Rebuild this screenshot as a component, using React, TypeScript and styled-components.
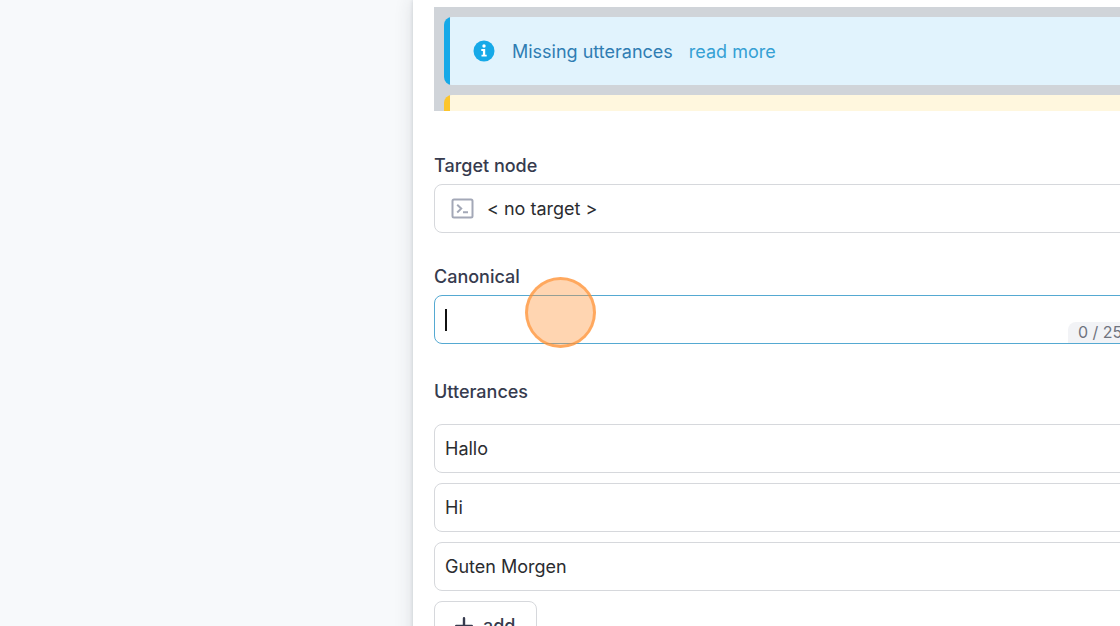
import React from "react";
import styled, { createGlobalStyle } from "styled-components";

const GlobalStyle = createGlobalStyle`
  * { box-sizing: border-box; }
  html, body, #root { height: 100%; }
  body {
    margin: 0;
    overflow: hidden;
    background: #f7f9fb;
    color: #2b2c2f;
    font-family: Inter, "Liberation Sans", sans-serif;
    font-size: 18px;
    font-weight: 400;
  }
  input, select, button { font: inherit; color: inherit; }
`;

const Page = styled.div`
  display: grid;
  grid-template-columns: 413px minmax(0, 1fr);
  height: 100%;
`;

const Backdrop = styled.aside`
  background: #f7f9fb;
`;

const Panel = styled.main`
  min-width: 0;
  padding: 7px 0 0 21px;
  background: #fff;
  box-shadow: 0 0 18px rgba(40, 48, 60, 0.14), 0 0 4px rgba(40, 48, 60, 0.16);
`;

const Content = styled.div`
  width: calc(100% + 23px);
`;

const Alerts = styled.section`
  display: flex;
  flex-direction: column;
  gap: 10px;
  height: 104px;
  padding: 10px;
  overflow: hidden;
  background: #d0d4d9;
`;

const Alert = styled.div<{ $tone: "info" | "warning" }>`
  display: flex;
  flex: none;
  align-items: center;
  height: 68px;
  padding-left: 29px;
  border-radius: 8px;
  background: linear-gradient(
    to right,
    ${(p) => (p.$tone === "info" ? "#16a9e8 6px, #e1f3fd 6px" : "#fcc52c 6px, #fff7de 6px")}
  );
  color: #2f7db3;
`;

const AlertText = styled.span`
  margin: 0 16px 0 17px;
`;

const AlertLink = styled.a`
  color: #35a0d4;
  text-decoration: none;
`;

const Field = styled.section<{ $space: number; $gap: number }>`
  display: flex;
  flex-direction: column;
  gap: ${(p) => p.$gap}px;
  margin-top: ${(p) => p.$space}px;
`;

const Label = styled.label`
  color: #363b4e;
  font-size: 18px;
  font-weight: 500;
  line-height: 24px;
`;

const Heading = styled(Label).attrs({ as: "h2" })`
  margin: 0;
`;

const Box = styled.div<{ $active?: boolean }>`
  position: relative;
  display: flex;
  align-items: center;
  height: 49px;
  border: 1px solid ${(p) => (p.$active ? "#55a9d2" : "#d6d8dc")};
  border-radius: 8px;
  background: #fff;
`;

const TargetSelect = styled.select`
  flex: 1;
  height: 100%;
  padding: 0;
  border: 0;
  outline: 0;
  background: transparent;
  appearance: none;
`;

const TargetIcon = styled.svg`
  margin: 0 13px 0 16px;
`;

const TextInput = styled.input`
  flex: 1;
  min-width: 0;
  height: 100%;
  padding: 0 10px;
  border: 0;
  border-radius: 8px;
  outline: 0;
  background: transparent;
  caret-color: transparent;
`;

const Caret = styled.span`
  position: absolute;
  top: 13px;
  left: 10px;
  width: 2px;
  height: 22px;
  background: #111;
`;

const Counter = styled.span`
  align-self: flex-end;
  padding: 0 10px;
  border-radius: 8px 0 8px 0;
  background: #f2f3f6;
  color: #70747f;
  font-size: 16px;
  line-height: 21px;
`;

const ClickMarker = styled.span`
  position: absolute;
  top: -19px;
  left: 90px;
  width: 71px;
  height: 71px;
  border: 3px solid rgba(255, 145, 50, 0.65);
  border-radius: 50%;
  background: rgba(255, 145, 50, 0.38);
  pointer-events: none;
`;

const Rows = styled.div`
  display: flex;
  flex-direction: column;
  gap: 10px;
`;

const AddButton = styled.button`
  display: flex;
  align-items: center;
  align-self: flex-start;
  gap: 10px;
  height: 49px;
  padding: 0 21px 0 20px;
  border: 1px solid #d6d8dc;
  border-radius: 8px;
  background: #fff;
  color: #363b4e;
  font-size: 18px;
  font-weight: 500;
`;

const utterances = ["Hallo", "Hi", "Guten Morgen"];

export default function App() {
  return (
    <>
      <GlobalStyle />
      <Page>
        <Backdrop />
        <Panel>
          <Content>
            <Alerts>
              <Alert $tone="info">
                <svg width="22" height="22" viewBox="0 0 22 22" aria-hidden="true">
                  <circle cx="11" cy="11" r="10.5" fill="#16a9e8" />
                  <circle cx="11" cy="6" r="1.7" fill="#fff" />
                  <path d="M8.3 9.1h3.9v5.6h1.5v1.9H8.5v-1.9h1.4V11H8.3z" fill="#fff" />
                </svg>
                <AlertText>Missing utterances</AlertText>
                <AlertLink href="#read-more">read more</AlertLink>
              </Alert>
              <Alert $tone="warning" />
            </Alerts>

            <Field $space={43} $gap={6}>
              <Label htmlFor="target">Target node</Label>
              <Box>
                <TargetIcon width="23" height="21" viewBox="0 0 23 21" fill="none" stroke="#a3a8b7" strokeWidth="2" aria-hidden="true">
                  <rect x="1.5" y="1.5" width="20" height="18" rx="1.5" />
                  <path d="M6.2 6.8l4 3.8-4 3.8M12 14.2h5" />
                </TargetIcon>
                <TargetSelect id="target" defaultValue="none">
                  <option value="none">&lt; no target &gt;</option>
                </TargetSelect>
              </Box>
            </Field>

            <Field $space={32} $gap={6}>
              <Label htmlFor="canonical">Canonical</Label>
              <Box $active>
                <TextInput id="canonical" maxLength={255} />
                <Caret />
                <Counter>0 / 255</Counter>
                <ClickMarker />
              </Box>
            </Field>

            <Field $space={36} $gap={20}>
              <Heading>Utterances</Heading>
              <Rows>
                {utterances.map((text, i) => (
                  <Box key={text}>
                    <TextInput aria-label={`Utterance ${i + 1}`} defaultValue={text} />
                  </Box>
                ))}
                <AddButton type="button">
                  <svg width="18" height="18" viewBox="0 0 18 18" stroke="#363b4e" strokeWidth="2.4" strokeLinecap="round" aria-hidden="true">
                    <path d="M9 1.2v15.6M1.2 9h15.6" />
                  </svg>
                  add
                </AddButton>
              </Rows>
            </Field>
          </Content>
        </Panel>
      </Page>
    </>
  );
}
